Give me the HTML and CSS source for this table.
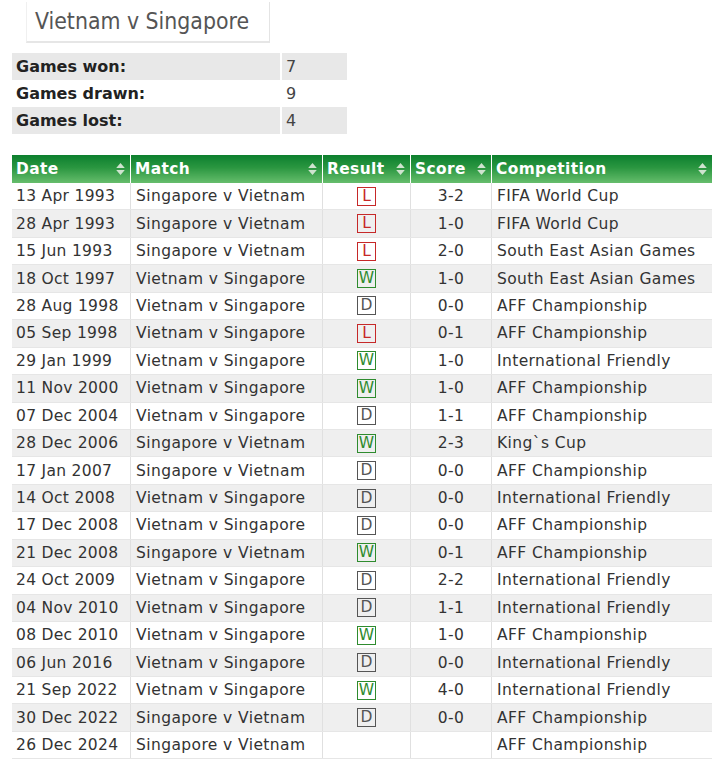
FILE: index.html
```html
<!DOCTYPE html>
<html>
<head>
<meta charset="utf-8">
<link rel="stylesheet" href="styles.css">
</head>
<body>
<div class="title">Vietnam v Singapore</div>
<table class="stats">
  <tr class="shade"><td class="label">Games won:</td><td class="val">7</td></tr>
  <tr><td class="label">Games drawn:</td><td class="val">9</td></tr>
  <tr class="shade"><td class="label">Games lost:</td><td class="val">4</td></tr>
</table>
<table class="matches">
  <thead>
    <tr>
      <th class="c-date"><span class="hd">Date</span><svg class="sort" viewBox="0 0 8 13"><path d="M0 5.5 L4 1 L8 5.5 Z M0 7.5 L8 7.5 L4 12 Z"/></svg></th>
      <th class="c-match"><span class="hd">Match</span><svg class="sort" viewBox="0 0 8 13"><path d="M0 5.5 L4 1 L8 5.5 Z M0 7.5 L8 7.5 L4 12 Z"/></svg></th>
      <th class="c-res"><span class="hd">Result</span><svg class="sort" viewBox="0 0 8 13"><path d="M0 5.5 L4 1 L8 5.5 Z M0 7.5 L8 7.5 L4 12 Z"/></svg></th>
      <th class="c-score"><span class="hd">Score</span><svg class="sort" viewBox="0 0 8 13"><path d="M0 5.5 L4 1 L8 5.5 Z M0 7.5 L8 7.5 L4 12 Z"/></svg></th>
      <th class="c-comp"><span class="hd">Competition</span><svg class="sort" viewBox="0 0 8 13"><path d="M0 5.5 L4 1 L8 5.5 Z M0 7.5 L8 7.5 L4 12 Z"/></svg></th>
    </tr>
  </thead>
  <tbody>
    <tr><td class="date">13 Apr 1993</td><td>Singapore v Vietnam</td><td class="res"><span class="badge loss">L</span></td><td class="score">3-2</td><td>FIFA World Cup</td></tr>
    <tr><td class="date">28 Apr 1993</td><td>Singapore v Vietnam</td><td class="res"><span class="badge loss">L</span></td><td class="score">1-0</td><td>FIFA World Cup</td></tr>
    <tr><td class="date">15 Jun 1993</td><td>Singapore v Vietnam</td><td class="res"><span class="badge loss">L</span></td><td class="score">2-0</td><td>South East Asian Games</td></tr>
    <tr><td class="date">18 Oct 1997</td><td>Vietnam v Singapore</td><td class="res"><span class="badge win">W</span></td><td class="score">1-0</td><td>South East Asian Games</td></tr>
    <tr><td class="date">28 Aug 1998</td><td>Vietnam v Singapore</td><td class="res"><span class="badge draw">D</span></td><td class="score">0-0</td><td>AFF Championship</td></tr>
    <tr><td class="date">05 Sep 1998</td><td>Vietnam v Singapore</td><td class="res"><span class="badge loss">L</span></td><td class="score">0-1</td><td>AFF Championship</td></tr>
    <tr><td class="date">29 Jan 1999</td><td>Vietnam v Singapore</td><td class="res"><span class="badge win">W</span></td><td class="score">1-0</td><td>International Friendly</td></tr>
    <tr><td class="date">11 Nov 2000</td><td>Vietnam v Singapore</td><td class="res"><span class="badge win">W</span></td><td class="score">1-0</td><td>AFF Championship</td></tr>
    <tr><td class="date">07 Dec 2004</td><td>Vietnam v Singapore</td><td class="res"><span class="badge draw">D</span></td><td class="score">1-1</td><td>AFF Championship</td></tr>
    <tr><td class="date">28 Dec 2006</td><td>Singapore v Vietnam</td><td class="res"><span class="badge win">W</span></td><td class="score">2-3</td><td>King`s Cup</td></tr>
    <tr><td class="date">17 Jan 2007</td><td>Singapore v Vietnam</td><td class="res"><span class="badge draw">D</span></td><td class="score">0-0</td><td>AFF Championship</td></tr>
    <tr><td class="date">14 Oct 2008</td><td>Vietnam v Singapore</td><td class="res"><span class="badge draw">D</span></td><td class="score">0-0</td><td>International Friendly</td></tr>
    <tr><td class="date">17 Dec 2008</td><td>Vietnam v Singapore</td><td class="res"><span class="badge draw">D</span></td><td class="score">0-0</td><td>AFF Championship</td></tr>
    <tr><td class="date">21 Dec 2008</td><td>Singapore v Vietnam</td><td class="res"><span class="badge win">W</span></td><td class="score">0-1</td><td>AFF Championship</td></tr>
    <tr><td class="date">24 Oct 2009</td><td>Vietnam v Singapore</td><td class="res"><span class="badge draw">D</span></td><td class="score">2-2</td><td>International Friendly</td></tr>
    <tr><td class="date">04 Nov 2010</td><td>Vietnam v Singapore</td><td class="res"><span class="badge draw">D</span></td><td class="score">1-1</td><td>International Friendly</td></tr>
    <tr><td class="date">08 Dec 2010</td><td>Vietnam v Singapore</td><td class="res"><span class="badge win">W</span></td><td class="score">1-0</td><td>AFF Championship</td></tr>
    <tr><td class="date">06 Jun 2016</td><td>Vietnam v Singapore</td><td class="res"><span class="badge draw">D</span></td><td class="score">0-0</td><td>International Friendly</td></tr>
    <tr><td class="date">21 Sep 2022</td><td>Vietnam v Singapore</td><td class="res"><span class="badge win">W</span></td><td class="score">4-0</td><td>International Friendly</td></tr>
    <tr><td class="date">30 Dec 2022</td><td>Singapore v Vietnam</td><td class="res"><span class="badge draw">D</span></td><td class="score">0-0</td><td>AFF Championship</td></tr>
    <tr><td class="date">26 Dec 2024</td><td>Singapore v Vietnam</td><td class="res"></td><td class="score"></td><td>AFF Championship</td></tr>
  </tbody>
</table>
</body>
</html>
```

FILE: styles.css
```css
html, body {
  margin: 0;
  padding: 0;
  background: #fff;
}
body {
  font-family: "DejaVu Sans", Verdana, sans-serif;
  color: #333;
}
.title {
  margin: 2px 0 0 26px;
  width: 234px;
  height: 39px;
  padding-left: 8px;
  border-left: 1px solid #f0f0f0;
  border-right: 1px solid #e4e4e4;
  border-bottom: 2px solid #e6e6e6;
  font-family: "DejaVu Sans Condensed", "DejaVu Sans", sans-serif;
  font-size: 22.8px;
  line-height: 39px;
  color: #555;
}
.stats {
  margin: 10px 0 0 12px;
  border-collapse: collapse;
  width: 335px;
}
.stats td {
  height: 27px;
  padding: 0 4px;
  font-size: 16px;
  color: #222;
}
.stats .label {
  width: 260px;
  font-weight: bold;
}
.stats .val {
  border-left: 2px solid #fff;
  color: #444;
}
.stats .shade td {
  background: #e8e8e8;
}
.matches {
  margin: 21px 0 0 12px;
  border-collapse: collapse;
  width: 700px;
  table-layout: fixed;
}
.matches th {
  height: 28px;
  padding: 0 4px;
  text-align: left;
  color: #fff;
  font-weight: bold;
  font-size: 15.4px;
  letter-spacing: 0.4px;
  background: linear-gradient(to bottom, #0c7f2e 0%, #2a9640 45%, #66bd6c 100%);
  border-right: 1px solid #fff;
  white-space: nowrap;
  position: relative;
}
.matches th:last-child {
  border-right: none;
}
.c-date { width: 110px; }
.c-match { width: 183px; }
.c-res { width: 79px; }
.c-score { width: 72px; }
.sort {
  position: absolute;
  right: 5px;
  top: 7px;
  width: 9px;
  height: 14px;
  fill: #cfe3cf;
}
.matches td {
  height: 26.45px;
  padding: 0 4px 0 5px;
  font-size: 15.5px;
  letter-spacing: 0.4px;
  color: #333;
  white-space: nowrap;
  border-right: 1px solid #e0e0e0;
  border-bottom: 1px solid #e6e6e6;
}
.matches td:last-child {
  border-right: none;
}
.matches td.date {
  padding-left: 4px;
  letter-spacing: 0.3px;
}
.matches tbody tr:nth-child(even) td {
  background: #efefef;
}
.matches td.res, .matches td.score {
  text-align: center;
  padding-left: 4px;
}
.badge {
  display: inline-block;
  width: 17px;
  height: 17px;
  line-height: 17px;
  border: 1px solid;
  font-size: 15.5px;
  letter-spacing: 0;
  text-align: center;
  vertical-align: middle;
}
.loss { color: #c62828; border-color: #c62828; }
.win { color: #2e8b2e; border-color: #2e8b2e; }
.draw { color: #555; border-color: #555; }
```
